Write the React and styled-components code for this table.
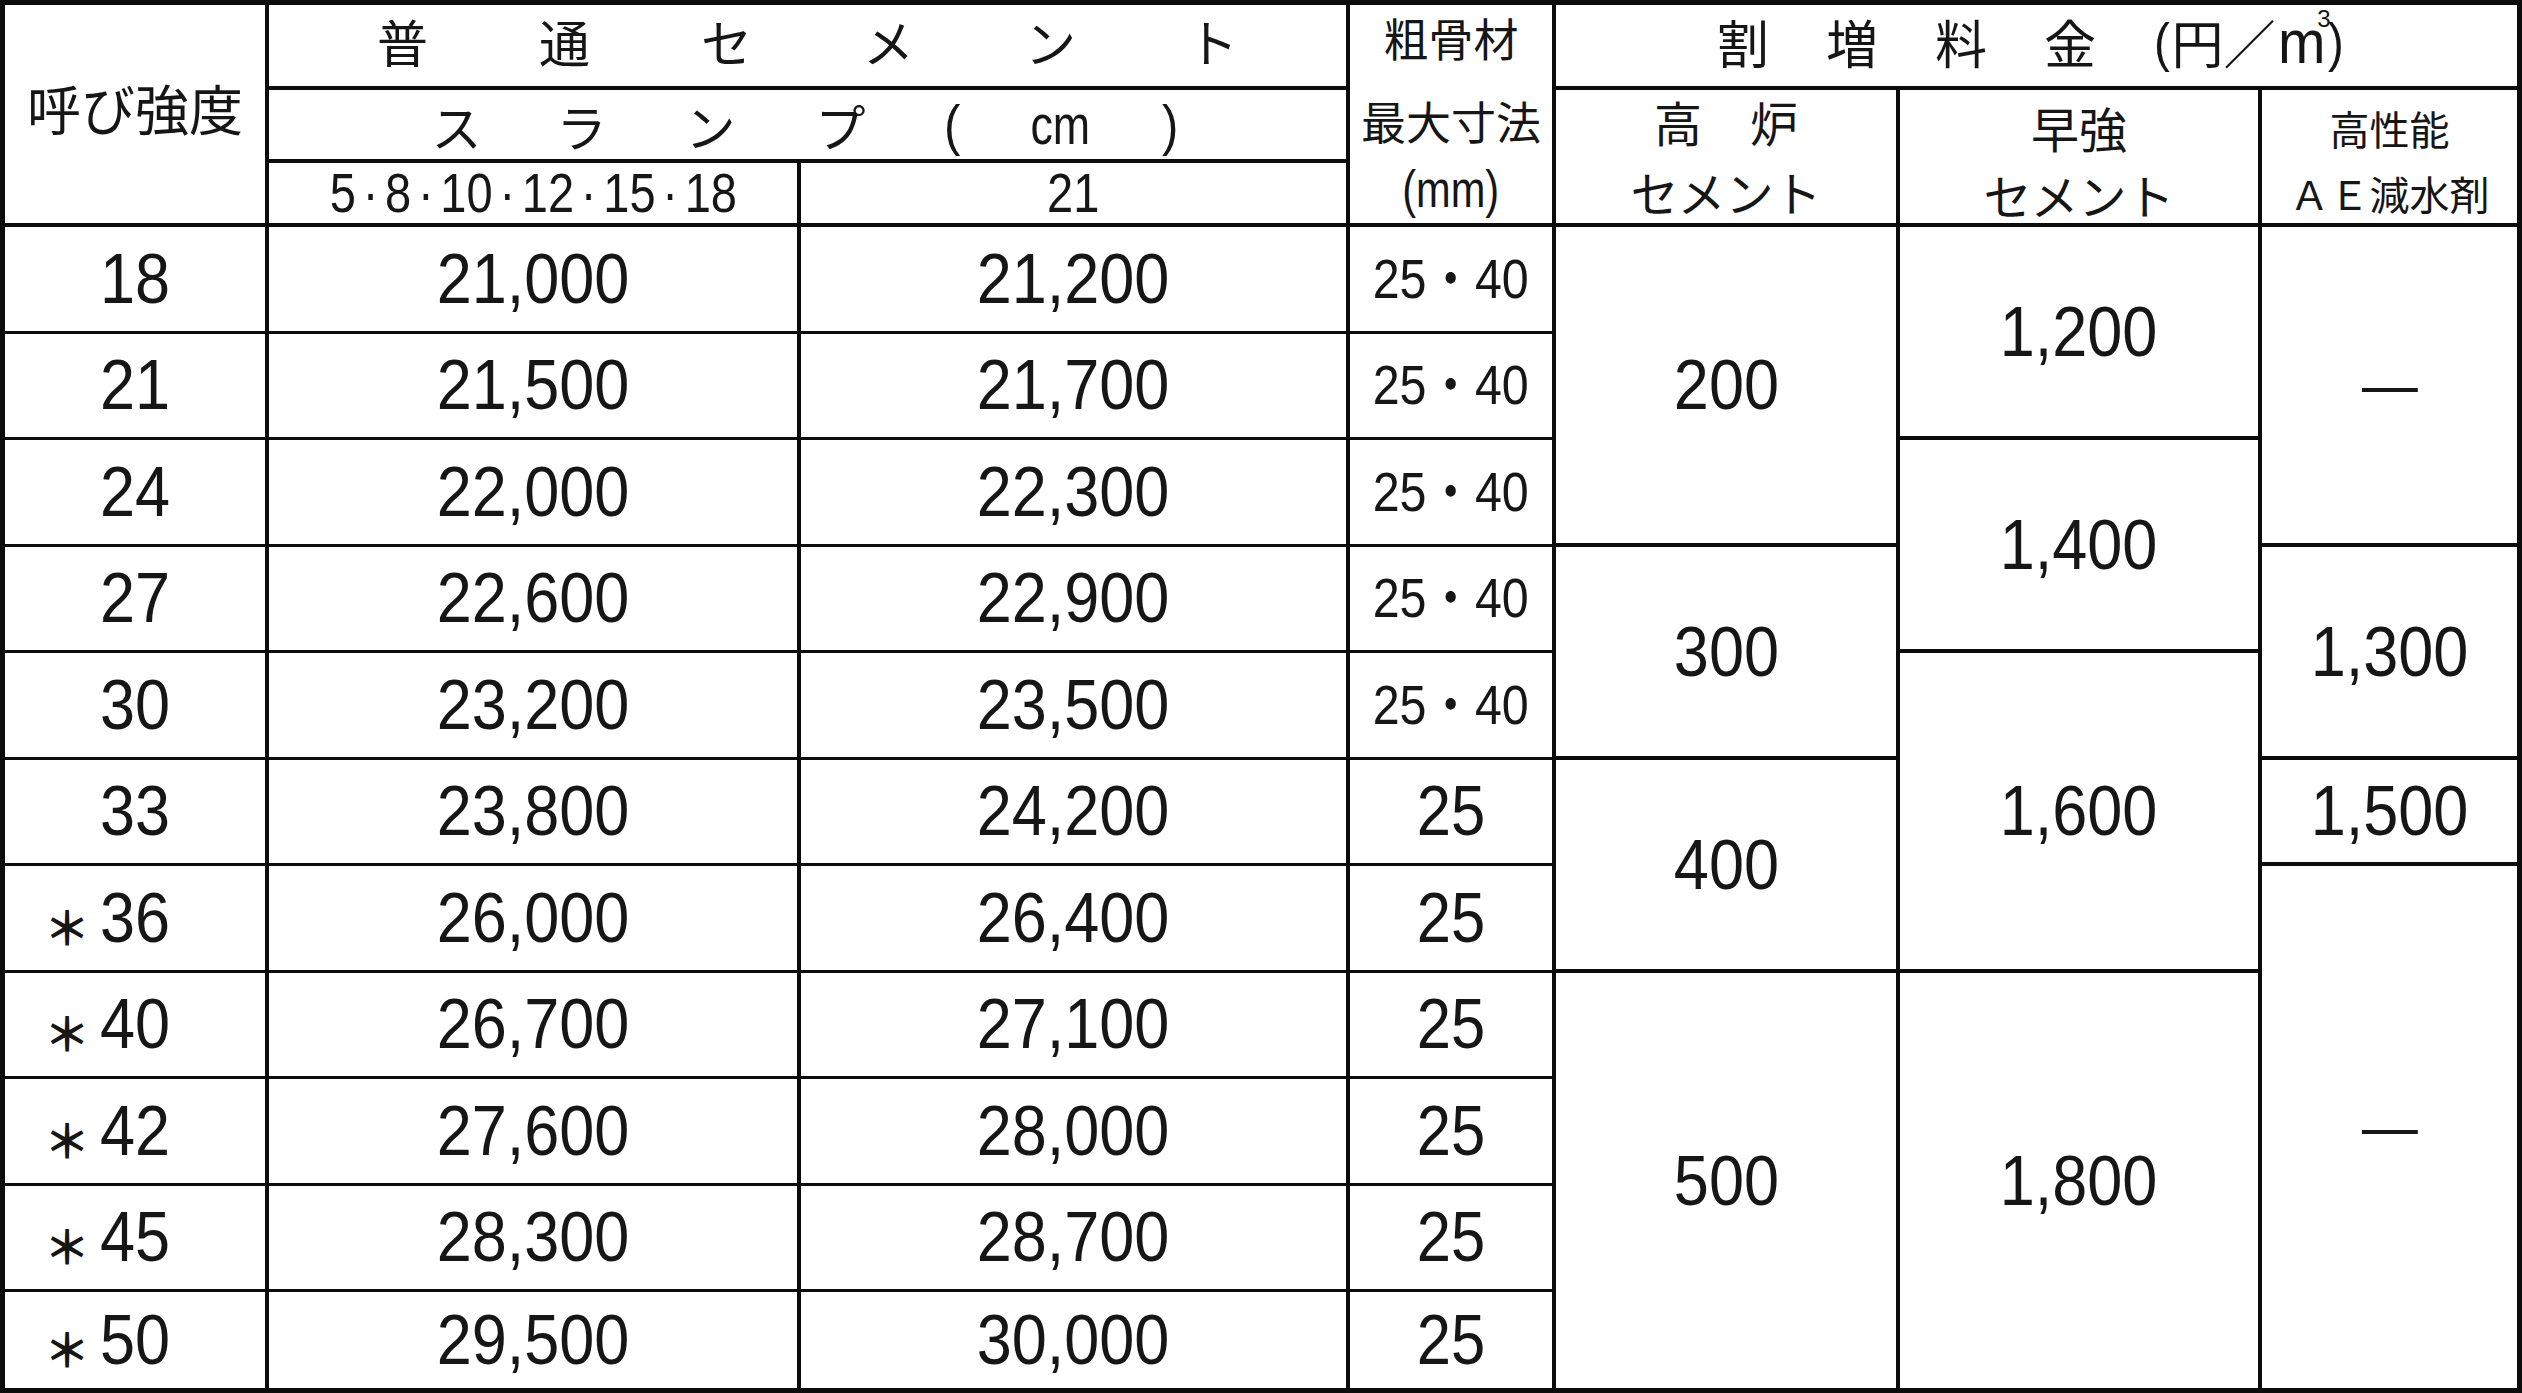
import styled, { createGlobalStyle } from 'styled-components'

//********************************************************//
// Page + table frame
//********************************************************//

const GlobalStyle = createGlobalStyle`
  html, body {
    margin: 0;
    padding: 0;
    background: #fff;
  }
  body {
    width: 2522px;
    height: 1393px;
    overflow: hidden;
  }
`

const INK = '#0c0c0c'

const Frame = styled.div`
  box-sizing: border-box;
  width: 2522px;
  height: 1393px;
  border: 5px solid ${INK};
  background: #fff;
`

const Sheet = styled.table`
  width: 100%;
  height: 100%;
  table-layout: fixed;
  border-collapse: collapse;
  border-style: hidden;
  color: #161616;
  font-family: 'Liberation Sans', 'Noto Sans CJK JP', sans-serif;
`

const Col = styled.col`
  width: ${(p) => p.$w}px;
`

const Row = styled.tr`
  height: ${(p) => p.$h}px;
`

const Head = styled.th`
  box-sizing: border-box;
  padding: ${(p) => p.$pt || 0}px 0 ${(p) => p.$lift || 0}px 0;
  border: 4px solid ${INK};
  font-family: 'Noto Sans CJK JP', sans-serif;
  font-weight: 400;
  font-size: ${(p) => p.$size || 50}px;
  line-height: 1;
  text-align: center;
  vertical-align: ${(p) => (p.$top ? 'top' : 'middle')};
  white-space: nowrap;
`

const Cell = styled.td`
  padding: 0;
  border-left: 4px solid ${INK};
  border-right: 4px solid ${INK};
  border-top: ${(p) => (p.$heavy ? 4 : 3)}px solid ${INK};
  border-bottom: ${(p) => (p.$heavy ? 4 : 3)}px solid ${INK};
  text-align: center;
  vertical-align: middle;
  font-size: ${(p) => p.$size || 70}px;
  line-height: 1.2;
  white-space: nowrap;
`

//********************************************************//
// Text pieces
//********************************************************//

const Num = styled.span`
  display: inline-block;
  transform: scaleX(${(p) => p.$squeeze || 0.9});
  font-family: 'Liberation Sans', 'Noto Sans CJK JP', sans-serif;
`

const Mark = styled.span`
  display: inline-block;
  width: 46px;
  margin-left: -52px;
  margin-right: 6px;
  font-family: 'Noto Sans CJK JP', sans-serif;
  font-size: 46px;
  font-weight: 700;
  vertical-align: -3px;
`

const Spread = styled.div`
  display: grid;
  grid-template-columns: ${(p) => p.$cols};
  justify-content: center;
  justify-items: center;
  align-items: center;
`

const Latin = styled.span`
  display: inline-block;
  font-family: 'Liberation Sans', sans-serif;
  font-size: ${(p) => p.$size || 54}px;
  transform: scaleX(${(p) => p.$squeeze || 0.88});
`

const Title = styled.div`
  display: flex;
  justify-content: center;
  align-items: center;
  padding-right: 40px;
`

const Suffix = styled.div`
  display: flex;
  align-items: center;
  margin-left: 29px;
`

const Cube = styled.span`
  display: inline-block;
  font-family: 'Liberation Sans', sans-serif;
  font-size: 24px;
  line-height: 1;
  margin-left: -10px;
  margin-right: -4px;
  align-self: flex-start;
  margin-top: -4px;
`

const Line = styled.div`
  line-height: ${(p) => p.$lh || 50}px;
  height: ${(p) => p.$lh || 50}px;
  margin-top: ${(p) => p.$gap || 0}px;
`

const Dot = styled.span`
  margin: 0 8px;
`

//********************************************************//
// Data
//********************************************************//

const widths = [262, 532, 549, 206, 344, 362, 257]

// 11 body rows share 1163px, the last one is a bit shorter
const bodyHeights = [107, 106, 107, 106, 107, 106, 107, 106, 107, 106, 98]

const rows = [
  { grade: '18', base: '21,000', high: '21,200', agg: '25・40' },
  { grade: '21', base: '21,500', high: '21,700', agg: '25・40' },
  { grade: '24', base: '22,000', high: '22,300', agg: '25・40' },
  { grade: '27', base: '22,600', high: '22,900', agg: '25・40' },
  { grade: '30', base: '23,200', high: '23,500', agg: '25・40' },
  { grade: '33', base: '23,800', high: '24,200', agg: '25' },
  { grade: '36', star: true, base: '26,000', high: '26,400', agg: '25' },
  { grade: '40', star: true, base: '26,700', high: '27,100', agg: '25' },
  { grade: '42', star: true, base: '27,600', high: '28,000', agg: '25' },
  { grade: '45', star: true, base: '28,300', high: '28,700', agg: '25' },
  { grade: '50', star: true, base: '29,500', high: '30,000', agg: '25' },
]

// merged surcharge cells: start row -> [rowSpan, text]
const slag = { 0: [3, '200'], 3: [2, '300'], 5: [2, '400'], 7: [4, '500'] }
const early = { 0: [2, '1,200'], 2: [2, '1,400'], 4: [3, '1,600'], 7: [4, '1,800'] }
const reducer = { 0: [3, '—'], 3: [2, '1,300'], 5: [1, '1,500'], 6: [5, '—'] }

const slumps = ['5', '8', '10', '12', '15', '18']

//********************************************************//

const App = () => {
  return (
    <Frame>
      <GlobalStyle />
      <Sheet>
        <colgroup>
          {widths.map((w, i) => (
            <Col key={i} $w={w} />
          ))}
        </colgroup>
        <thead>
          <Row $h={83}>
            <Head rowSpan={3} $size={54} $lift={12}>
              呼び強度
            </Head>
            <Head colSpan={2} $size={51} $lift={8}>
              <Spread $cols="repeat(6, 162px)">
                {'普通セメント'.split('').map((c) => (
                  <span key={c}>{c}</span>
                ))}
              </Spread>
            </Head>
            <Head rowSpan={3} $size={45} $top $pt={8}>
              <Line>粗骨材</Line>
              <Line $gap={33}>最大寸法</Line>
              <Line $gap={17}>
                <Latin $size={52} $squeeze={0.8}>
                  (mm)
                </Latin>
              </Line>
            </Head>
            <Head colSpan={3} $size={52} $lift={8}>
              <Title>
                <Spread $cols="repeat(4, 109px)">
                  {'割増料金'.split('').map((c) => (
                    <span key={c}>{c}</span>
                  ))}
                </Spread>
                <Suffix>
                  <Latin $size={54}>(</Latin>
                  <span>円</span>
                  <span>／</span>
                  <Latin $size={62} $squeeze={0.92}>
                    m
                  </Latin>
                  <Cube>3</Cube>
                  <Latin $size={54}>)</Latin>
                </Suffix>
              </Title>
            </Head>
          </Row>
          <Row $h={73}>
            <Head colSpan={2} $size={50}>
              <Spread $cols="124px 126px 132px 128px 96px 120px 100px">
                <span>ス</span>
                <span>ラ</span>
                <span>ン</span>
                <span>プ</span>
                <Latin $size={56}>(</Latin>
                <Latin $size={56} $squeeze={0.8}>
                  cm
                </Latin>
                <Latin $size={56}>)</Latin>
              </Spread>
            </Head>
            <Head rowSpan={2} $size={48} $top $pt={6}>
              <Line>高　炉</Line>
              <Line $gap={20}>セメント</Line>
            </Head>
            <Head rowSpan={2} $size={48} $top $pt={12}>
              <Line>早強</Line>
              <Line $gap={17}>セメント</Line>
            </Head>
            <Head rowSpan={2} $size={40} $top $pt={16}>
              <Line $lh={44}>高性能</Line>
              <Line $lh={44} $gap={21}>
                ＡＥ減水剤
              </Line>
            </Head>
          </Row>
          <Row $h={64}>
            <Head>
              <Latin $size={56} $squeeze={0.84}>
                {slumps.map((s, i) => (
                  <span key={s}>
                    {i > 0 && <Dot>·</Dot>}
                    {s}
                  </span>
                ))}
              </Latin>
            </Head>
            <Head>
              <Latin $size={56} $squeeze={0.84}>
                21
              </Latin>
            </Head>
          </Row>
        </thead>
        <tbody>
          {rows.map((r, i) => (
            <Row key={r.grade} $h={bodyHeights[i]}>
              <Cell>
                {r.star && <Mark>＊</Mark>}
                <Num>{r.grade}</Num>
              </Cell>
              <Cell>
                <Num>{r.base}</Num>
              </Cell>
              <Cell>
                <Num>{r.high}</Num>
              </Cell>
              <Cell $size={r.agg.length > 2 ? 55 : 70}>
                <Num $squeeze={0.88}>{r.agg}</Num>
              </Cell>
              {[slag, early, reducer].map(
                (group, k) =>
                  group[i] && (
                    <Cell
                      key={k}
                      rowSpan={group[i][0]}
                      $heavy
                      $size={group[i][1] === '—' ? 62 : 70}
                    >
                      <Num>{group[i][1]}</Num>
                    </Cell>
                  )
              )}
            </Row>
          ))}
        </tbody>
      </Sheet>
    </Frame>
  )
}

export default App
